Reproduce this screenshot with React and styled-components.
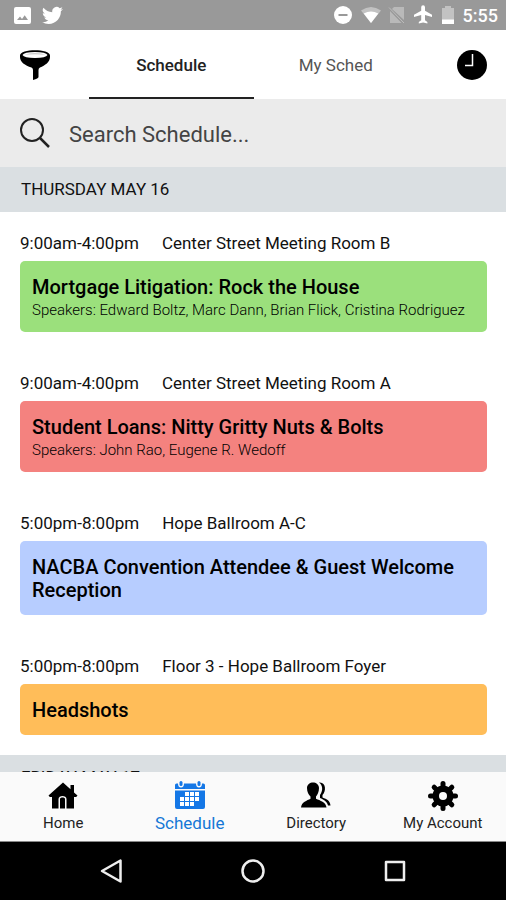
import React, { useState } from "react";
import styled, { createGlobalStyle } from "styled-components";

const days = [
  {
    name: "THURSDAY MAY 16",
    sessions: [
      {
        time: "9:00am-4:00pm",
        room: "Center Street Meeting Room B",
        title: "Mortgage Litigation: Rock the House",
        speakers: "Edward Boltz, Marc Dann, Brian Flick, Cristina Rodriguez",
        color: "#9be07c"
      },
      {
        time: "9:00am-4:00pm",
        room: "Center Street Meeting Room A",
        title: "Student Loans: Nitty Gritty Nuts & Bolts",
        speakers: "John Rao, Eugene R. Wedoff",
        color: "#f4827f"
      },
      {
        time: "5:00pm-8:00pm",
        room: "Hope Ballroom A-C",
        title: "NACBA Convention Attendee & Guest Welcome Reception",
        color: "#b7cdff"
      },
      {
        time: "5:00pm-8:00pm",
        room: "Floor 3 - Hope Ballroom Foyer",
        title: "Headshots",
        color: "#ffbd59"
      }
    ]
  },
  { name: "FRIDAY MAY 17", sessions: [] }
];

const tabs = ["Schedule", "My Sched"];

const ImageIcon = () => (
  <svg width="17" height="17" viewBox="0 0 17 17" aria-hidden="true">
    <rect width="17" height="17" rx="2" fill="#fff" />
    <path d="M3 13l3-3.5 2 2.4 2.7-3.6L14 13z" fill="#999" />
  </svg>
);

const TwitterIcon = () => (
  <svg width="21" height="21" viewBox="0 0 24 24" fill="#fff" aria-hidden="true">
    <path d="M23.95 4.57a10 10 0 0 1-2.82.77 4.96 4.96 0 0 0 2.16-2.72c-.95.55-2 .95-3.13 1.18a4.92 4.92 0 0 0-8.38 4.48A13.93 13.93 0 0 1 1.64 3.16a4.92 4.92 0 0 0 1.52 6.57 4.9 4.9 0 0 1-2.23-.61v.06a4.92 4.92 0 0 0 3.95 4.83 5 5 0 0 1-2.21.08 4.94 4.94 0 0 0 4.6 3.42A9.87 9.87 0 0 1 0 19.54a13.99 13.99 0 0 0 7.55 2.21c9.05 0 14-7.5 14-13.98 0-.21 0-.42-.02-.63a9.94 9.94 0 0 0 2.42-2.57z" />
  </svg>
);

const StatusIcons = () => (
  <svg width="121" height="20" viewBox="0 0 121 20" fill="#fff" aria-hidden="true">
    <circle cx="9" cy="10" r="9" />
    <path d="M4.500 9h9v2h-9z" fill="#999" />
    <path d="M27 5.500Q37 -1.500 47 5.500L37 18z" opacity=".4" />
    <path d="M29.700 8.500Q37 4.500 44.300 8.500L37 18z" />
    <path d="M60 2h10v13L58 4zM56 6l11.500 12H56z" opacity=".32" />
    <path d="M55 2.500L70 18" stroke="#fff" strokeWidth="1" opacity=".35" />
    <path d="M98 12v-2.200L91 5.700V2.200a1.900 1.900 0 0 0-3.800 0v3.500L80 9.800V12l7.200-2v5.200L84.800 17v1.500l4.300-1 4.300 1V17L91 15.200V10z" />
    <path d="M108 3h3V1h6v2h3v12h-12z" opacity=".4" />
    <path d="M108 14.500h12V19h-12z" />
  </svg>
);

const FunnelIcon = () => (
  <svg width="30" height="30" viewBox="0 0 30 30" aria-hidden="true">
    <path d="M0 5.500C0-1.500 30-1.500 30 5.500v1.500C30 12 25 15.500 20 17.500q-1.500.8-1.500 2.500v7q0 1.500-5.500 3V20q0-1.700-1.500-2.500C5 15.500 0 12 0 7z" />
    <path d="M2.500 5Q4 2 15 2T27.500 5Q26 8 15 8T2.500 5z" fill="#fff" />
    <path d="M4.500 4.500Q15 2 25.500 4.500Q15 3.800 4.500 4.500z" fill="#bbb" />
  </svg>
);

const ClockIcon = () => (
  <svg width="30" height="30" viewBox="0 0 30 30" aria-hidden="true">
    <circle cx="15" cy="15" r="15" />
    <path d="M15.500 4v11.500H8" fill="none" stroke="#fff" strokeWidth="1.500" />
  </svg>
);

const SearchIcon = () => (
  <svg width="30" height="30" viewBox="0 0 30 30" fill="none" stroke="#222" strokeWidth="2" aria-hidden="true">
    <circle cx="12" cy="12" r="11" />
    <path d="M19.500 19.500L29 29" strokeWidth="2.500" />
  </svg>
);

const HomeIcon = () => (
  <svg width="30" height="30" viewBox="0 0 30 30" aria-hidden="true">
    <path d="M15 1.500L.5 14.500l1.300 1.500H4v11.500h6.500V18c0-4 8-4 8 0v9.500H26V16h2.200l1.300-1.500-3.500-3.100V4h-3.500v4.200z" />
    <path d="M12 27.500V18c0-2 5-2 5 0v9.500z" />
  </svg>
);

const cells = [[12, 12], [17, 12], [22, 12], [7, 17], [12, 17], [17, 17], [22, 17], [7, 22], [12, 22], [17, 22]];

const CalendarIcon = () => (
  <svg width="30" height="30" viewBox="0 0 30 30" fill="#1477e6" aria-hidden="true">
    <path d="M0 9.500h30V26q0 2-2 2H2q-2 0-2-2z" />
    <path d="M0 8V4q0-1.500 1.500-1.500H3q0 4 3 4t3-4h12q0 4 3 4t3-4h1.500Q30 2.500 30 4v4z" />
    <rect x="4.500" width="3" height="5" rx="1.500" />
    <rect x="22.500" width="3" height="5" rx="1.500" />
    {cells.map(([x, y]) => (
      <rect key={x + "-" + y} x={x - 2} y={y - 1} width="4" height="4" fill="#fff" />
    ))}
  </svg>
);

const PeopleIcon = () => (
  <svg width="30" height="30" viewBox="0 0 30 30" aria-hidden="true">
    <path d="M6 7c0-7.500 12-7.500 12 0 0 4-1.500 6.500-3 8.500v2.200c4 1.800 10 3.300 10.500 8.800H0c.5-5.500 6-7 9.500-8.800v-2.200C7.500 13.500 6 11 6 7z" />
    <path d="M18 1.500c7-1 7.500 8.500 3.500 12.500v2.500c4.500 1.700 7.500 3 8 8H27c-1-4-4.500-6-8-7.500v-3c3.500-5 2.500-10-1-12.500z" />
  </svg>
);

const GearIcon = () => (
  <svg width="30" height="30" viewBox="0 0 30 30" aria-hidden="true">
    <g transform="translate(15 15)">
      {[0, 45, 90, 135].map(a => (
        <rect key={a} x="-2.500" y="-15" width="5" height="30" rx="2.500" transform={`rotate(${a})`} />
      ))}
      <circle r="10.500" />
      <circle r="4" fill="#fafafa" />
    </g>
  </svg>
);

const navItems = [
  { label: "Home", Icon: HomeIcon },
  { label: "Schedule", Icon: CalendarIcon },
  { label: "Directory", Icon: PeopleIcon },
  { label: "My Account", Icon: GearIcon }
];

const Session = ({ session }) => (
  <SessionItem>
    <Meta>
      <span>{session.time}</span>
      <span>{session.room}</span>
    </Meta>
    <Card $color={session.color}>
      <h3>{session.title}</h3>
      {session.speakers && <p>Speakers: {session.speakers}</p>}
    </Card>
  </SessionItem>
);

const App = () => {
  const [tab, setTab] = useState("Schedule");
  const [page, setPage] = useState("Schedule");
  const [search, setSearch] = useState("");

  return (
    <Container>
      <GlobalStyle />
      <StatusBar>
        <ImageIcon />
        <TwitterIcon />
        <div className="right">
          <StatusIcons />
          <span>5:55</span>
        </div>
      </StatusBar>
      <Header>
        <IconButton aria-label="Filter">
          <FunnelIcon />
        </IconButton>
        <Tabs>
          {tabs.map(name => (
            <Tab key={name} $active={tab === name} onClick={() => setTab(name)}>
              {name}
            </Tab>
          ))}
        </Tabs>
        <IconButton aria-label="Now">
          <ClockIcon />
        </IconButton>
      </Header>
      <SearchBar>
        <SearchIcon />
        <input
          type="text"
          aria-label="Search Schedule"
          placeholder="Search Schedule..."
          value={search}
          onChange={e => setSearch(e.target.value)}
        />
      </SearchBar>
      <List>
        {days.map(day => (
          <section key={day.name}>
            <DayTitle>{day.name}</DayTitle>
            {day.sessions.map(session => (
              <Session key={session.title} session={session} />
            ))}
          </section>
        ))}
      </List>
      <BottomNav>
        {navItems.map(({ label, Icon }) => (
          <NavButton key={label} $active={page === label} onClick={() => setPage(label)}>
            <Icon />
            <span>{label}</span>
          </NavButton>
        ))}
      </BottomNav>
      <SystemBar>
        <button aria-label="Back">
          <svg width="24" height="24" viewBox="0 0 24 24">
            <path d="M21.500 1.500v21L3 12z" />
          </svg>
        </button>
        <button aria-label="Home screen">
          <svg width="24" height="24" viewBox="0 0 24 24">
            <circle cx="12" cy="12" r="10.500" />
          </svg>
        </button>
        <button aria-label="Recent apps">
          <svg width="24" height="24" viewBox="0 0 24 24">
            <rect x="3" y="3" width="18" height="18" />
          </svg>
        </button>
      </SystemBar>
    </Container>
  );
};

const GlobalStyle = createGlobalStyle`
  * {
    box-sizing: border-box;
  }
  body {
    margin: 0;
    background: #fff;
    font-family: Roboto, "Liberation Sans", sans-serif;
  }
  button {
    border: none;
    background: none;
    padding: 0;
    font-family: inherit;
    cursor: pointer;
  }
  svg {
    display: block;
    flex-shrink: 0;
  }
`;

const Container = styled.div`
  height: 100vh;
  display: flex;
  flex-direction: column;
  color: #111;
`;

const StatusBar = styled.div`
  display: flex;
  align-items: center;
  gap: 11px;
  height: 30px;
  flex-shrink: 0;
  padding: 0 8px 0 14px;
  background: #999;

  .right {
    display: flex;
    align-items: center;
    gap: 8px;
    margin-left: auto;
    color: #fff;
    font-size: 18px;
    font-weight: 500;
  }
`;

const Header = styled.header`
  display: flex;
  align-items: stretch;
  height: 69px;
  flex-shrink: 0;
  padding: 0 19px 0 20px;
`;

const IconButton = styled.button`
  display: flex;
  align-items: center;
`;

const Tabs = styled.nav`
  flex: 1;
  display: flex;
  padding: 0 39px;
`;

const Tab = styled.button`
  flex: 1;
  padding-top: 2px;
  border-bottom: 2px solid ${({ $active }) => ($active ? "#222" : "transparent")};
  color: ${({ $active }) => ($active ? "#222" : "#555")};
  font-size: 17px;
  font-weight: ${({ $active }) => ($active ? 500 : 400)};
`;

const SearchBar = styled.label`
  display: flex;
  align-items: center;
  gap: 19px;
  height: 68px;
  flex-shrink: 0;
  padding: 0 20px;
  background: #ebebeb;

  input {
    flex: 1;
    min-width: 0;
    padding: 2px 0 0;
    border: none;
    outline: none;
    background: none;
    font-family: inherit;
    font-size: 22px;
    color: #333;
  }
  input::placeholder {
    color: #444;
    opacity: 1;
  }
`;

const List = styled.main`
  flex: 1;
  min-height: 0;
  overflow: hidden auto;
  scrollbar-width: none;
`;

const DayTitle = styled.h2`
  margin: 0;
  padding: 0 21px;
  background: #dadfe2;
  font-size: 17px;
  font-weight: 400;
  line-height: 45px;
`;

const SessionItem = styled.article`
  padding: 19px 19px 20px 20px;
`;

const Meta = styled.div`
  display: flex;
  gap: 23px;
  margin-bottom: 6px;
  font-size: 17px;
  line-height: 24px;
`;

const Card = styled.div`
  padding: 15px 12px 13px;
  border-radius: 5px;
  background: ${({ $color }) => $color};
  color: #000;

  h3 {
    margin: 0;
    font-size: 20px;
    font-weight: 500;
    line-height: 23px;
  }
  p {
    margin: 2px 0 0;
    font-size: 15px;
    font-weight: 300;
    line-height: 18px;
  }
`;

const BottomNav = styled.nav`
  display: flex;
  height: 70px;
  flex-shrink: 0;
  background: #fafafa;
  border-bottom: 1px solid #888;
`;

const NavButton = styled.button`
  flex: 1;
  display: flex;
  flex-direction: column;
  align-items: center;
  padding-top: 9px;
  color: ${({ $active }) => ($active ? "#1477d6" : "#222")};
  font-size: ${({ $active }) => ($active ? 17 : 15)}px;

  span {
    line-height: 25px;
  }
`;

const SystemBar = styled.div`
  display: flex;
  justify-content: center;
  align-items: center;
  gap: 118px;
  height: 58px;
  flex-shrink: 0;
  background: #000;

  svg {
    fill: none;
    stroke: #eee;
    stroke-width: 2.5;
    stroke-linejoin: round;
  }
`;

export default App;
